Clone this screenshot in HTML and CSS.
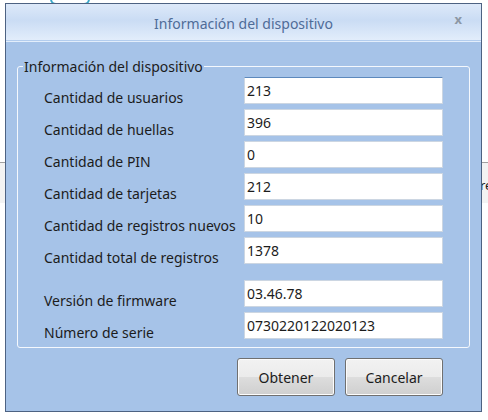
FILE: index.html
```html
<!DOCTYPE html>
<html lang="es">
<head>
  <meta charset="UTF-8" />
  <title>Información del dispositivo</title>
  <link rel="stylesheet" href="styles.css">
</head>
<body>

<div class="desk">
  <div class="app-icon"></div>
  <div class="grid-line left"></div>
  <div class="grid-line right"><span>re</span></div>
</div>

<div class="dialog">
  <div class="titlebar">
    <span class="title">Información del dispositivo</span>
    <span class="close">x</span>
  </div>

  <div class="body">
    <fieldset class="group">
      <legend>Información del dispositivo</legend>
      <div class="rows">
        <label>Cantidad de usuarios</label>
        <input type="text" class="focus" value="213" />
        <label>Cantidad de huellas</label>
        <input type="text" value="396" />
        <label>Cantidad de PIN</label>
        <input type="text" value="0" />
        <label>Cantidad de tarjetas</label>
        <input type="text" value="212" />
        <label>Cantidad de registros nuevos</label>
        <input type="text" value="10" />
        <label>Cantidad total de registros</label>
        <input type="text" value="1378" />
      </div>
      <div class="rows second">
        <label>Versión de firmware</label>
        <input type="text" value="03.46.78" />
        <label>Número de serie</label>
        <input type="text" value="0730220122020123" />
      </div>
    </fieldset>

    <div class="buttons">
      <button>Obtener</button>
      <button>Cancelar</button>
    </div>
  </div>
</div>

</body>
</html>
```

FILE: styles.css
```css
body { margin: 0; background: #fff; font-family: "Noto Sans", "Open Sans", sans-serif; font-size: 14px; color: #1c1c1c; width: 488px; height: 420px; overflow: hidden; position: relative; }

/* whatever sits behind the dialog */
.desk { position: absolute; inset: 0; }
.app-icon { position: absolute; left: 50px; top: -12px; width: 36px; height: 13px; border: 2px solid #3aa7c9; border-radius: 6px; }
.grid-line { position: absolute; top: 162px; height: 40px; border-top: 1px solid #a0a0a0; background: #f3f3f3; }
.grid-line.left { left: 0; width: 5px; }
.grid-line.right { left: 482px; width: 6px; overflow: hidden; }
.grid-line.right span { display: block; margin-top: 13px; margin-left: -2px; font-size: 13px; }

.dialog { position: absolute; left: 5px; top: 3px; width: 475px; height: 407px; border: 1px solid #4d6282; background: #a6c3e8; display: flex; flex-direction: column; }

.titlebar { height: 36px; display: flex; align-items: center; justify-content: center; position: relative; background: linear-gradient(#dde9f9, #cadcf4 45%, #e2edfb); border-bottom: 1px solid #b3cdee; box-shadow: 0 1px 0 #e3eefb; }
.title { color: #4f6c98; font-size: 14px; padding-top: 3px; }
.close { position: absolute; right: 19px; top: 6px; color: #8c97a4; font-size: 13px; font-weight: bold; }

.body { flex: 1; padding: 16px 11px 0 11px; display: flex; flex-direction: column; }

.group { margin: 0; border: 1px solid #f4f8fd; border-radius: 3px; padding: 1px 26px 8px 26px; }
.group legend { padding: 0 1px; margin-left: -21px; font-size: 14px; color: #1c1c1c; }

.rows { display: grid; grid-template-columns: 1fr 199px; grid-auto-rows: 27px; row-gap: 5px; }
.rows.second { margin-top: 16px; }
.rows label { line-height: 20px; padding-top: 11px; white-space: nowrap; }
.rows input { margin: 0; height: 27px; box-sizing: border-box; border: 1px solid #ccd6e2; background: #fff; font-family: inherit; font-size: 14px; color: #1c1c1c; padding: 0 2px; outline: none; }
.rows input.focus { border-top-color: #5d89bd; }

.buttons { display: flex; justify-content: flex-end; gap: 10px; margin-top: 10px; padding-right: 27px; }
.buttons button { width: 98px; height: 38px; border: 1px solid #707070; border-radius: 3px; background: linear-gradient(#f2f2f2, #ebebeb 50%, #dddddd 51%, #cfcfcf); font-family: inherit; font-size: 14px; color: #1c1c1c; box-shadow: inset 0 0 0 1px #fcfcfc; }
```
